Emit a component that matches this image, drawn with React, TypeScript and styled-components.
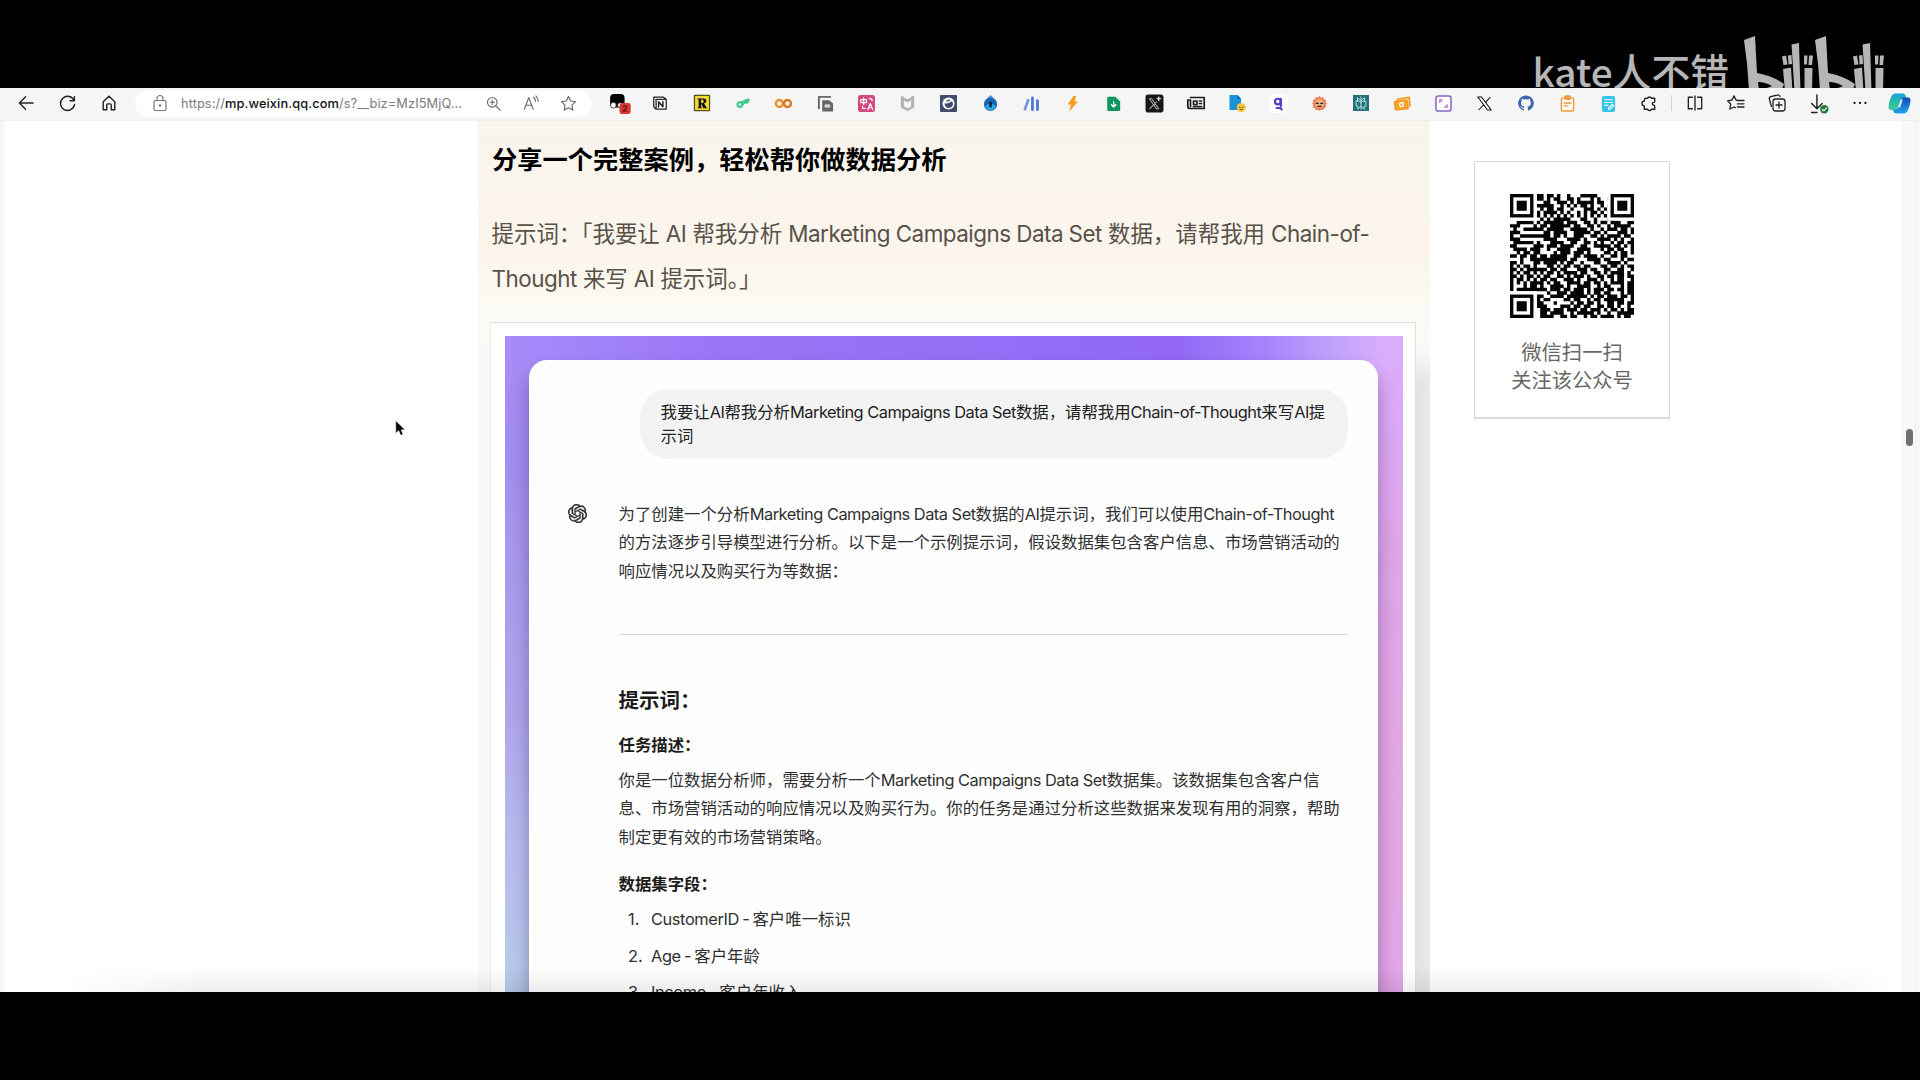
import React from "react";
import styled, { createGlobalStyle } from "styled-components";

const Global = createGlobalStyle`
  * { box-sizing: border-box; }
  body { margin: 0; background: #000; overflow: hidden; }
`;

const SANS = `Inter, "Noto Sans CJK SC", sans-serif`;

const Screen = styled.div`
  display: flex;
  flex-direction: column;
  width: 1920px;
  height: 1080px;
  background: #000;
  font-family: ${SANS};
  position: relative;
`;

const TopBand = styled.div`
  height: 88px;
  flex: none;
  display: flex;
  justify-content: flex-end;
  align-items: flex-start;
  overflow: hidden;
  padding: 36px 34px 0 0;
  gap: 15px;
  color: #b6b6b6;
`;
const Author = styled.span`
  font: 500 38.8px/52px "Noto Sans CJK SC", sans-serif;
  padding-top: 8px;
  white-space: nowrap;
`;
const LogoBox = styled.div`
  width: 142px;
  height: 52px;
  svg { display: block; }
`;

const Toolbar = styled.div`
  height: 33px;
  flex: none;
  display: flex;
  align-items: center;
  padding-bottom: 2px;
  background: #f5f5f5;
  border-bottom: 1px solid #efefef;
`;
const NavGroup = styled.div`
  display: flex;
  width: 135px;
  padding-left: 5px;
`;
const Cell = styled.div<{ $w?: number }>`
  width: ${(p) => p.$w ?? 41.23}px;
  flex: none;
  height: 27px;
  display: flex;
  justify-content: center;
  align-items: center;
  svg { display: block; overflow: visible; }
`;
const AddressBar = styled.div`
  width: 457px;
  height: 27px;
  flex: none;
  display: flex;
  align-items: center;
  border-radius: 14px;
  background: #fff;
  padding-left: 16px;
`;
const Url = styled.div`
  width: 294px;
  margin-left: 12px;
  font-size: 12.8px;
  letter-spacing: 0.1px;
  color: #7b7b7b;
  white-space: nowrap;
  b { font-weight: 500; color: #111; }
`;
const Extensions = styled.div`
  display: flex;
  align-items: center;
  padding-left: 6.5px;
`;
const Divider = styled.div`
  width: 1px;
  height: 16px;
  margin: 0 2px 0 1px;
  background: #d4d4d4;
`;

const Page = styled.div`
  height: 871px;
  flex: none;
  overflow: hidden;
  display: flex;
  background: #fff;
  border-left: 4px solid #f7f7f7;
  border-right: 4px solid #f7f7f7;
  position: relative;
`;
const LeftSpace = styled.div`
  width: 474px;
  flex: none;
`;
const Article = styled.main`
  width: 952px;
  flex: none;
  height: 871px;
  overflow: hidden;
  padding: 19.5px 0 0 12px;
  background: linear-gradient(#f9f6e8 0, #f9f4ec 25px, #fbf5ec 130px, #fcf8ee 168px, #fcfbf7 195px, #fbf9f7 230px);
`;
const Title = styled.h1`
  margin: 0 0 0 2px;
  font: 700 25.25px/34px "Noto Sans CJK SC", sans-serif;
  color: #000;
  white-space: nowrap;
`;
const Prompt = styled.div`
  margin: 36.5px 0 0 1.5px;
  font-size: 22.45px;
  line-height: 45px;
  color: #595149;
  word-spacing: -0.25px;
`;
const Line = styled.div`
  white-space: nowrap;
`;
const Latin = styled.span<{ $ls?: number; $ws?: number }>`
  letter-spacing: ${(p) => p.$ls ?? -0.5}px;
  word-spacing: ${(p) => (p.$ws === undefined ? "inherit" : `${p.$ws}px`)};
`;
const Figure = styled.div`
  margin-top: 21px;
  width: 926px;
  height: 900px;
  padding: 13px 12px 0 14px;
  background: #fff;
  border: 1px solid #ecd9d6;
  border-left-color: #f0eaea;
  border-right-color: #eaddd4;
  box-shadow: 24px 40px 22px -4px rgba(0, 0, 0, 0.09);
`;
const Backdrop = styled.div`
  height: 900px;
  padding: 24px 25px 0 24px;
  background:
    linear-gradient(90deg, #a68cfa 0, #9a74f6 25%, #966ef6 50%, #9268f5 75%, #a884fa 85%, #c5a4fd 93%, #dbacfc 98%) 0 0 / 100% 24px no-repeat,
    linear-gradient(#dbacfc 0, #dca9f5 60px, #dfa5e8 200px, #e3a7e3 420px, #e3a5e8 670px) 100% 24px / 40px 100% no-repeat,
    linear-gradient(#a88bf8 0, #a28df0 120px, #aa9cec 250px, #afa6ea 380px, #b7bcee 510px, #b8cdea 660px);
`;
const Card = styled.div`
  height: 900px;
  padding: 29px 30px 0 89.5px;
  border-radius: 18px 18px 0 0;
  background: #fefefe;
  box-shadow: 0 12px 18px rgba(50, 25, 90, 0.38);
`;
const Bubble = styled.div`
  margin-left: 21.5px;
  width: 708px;
  height: 69.5px;
  padding: 11px 0 0 20.5px;
  border-radius: 28px;
  background: #f3f3f3;
  font-size: 16.4px;
  line-height: 24.3px;
  color: #222;
`;
const Answer = styled.div`
  display: flex;
  margin-top: 41px;
  margin-left: -50.5px;
`;
const Avatar = styled.div`
  width: 50.5px;
  flex: none;
  padding-top: 4.5px;
  svg { display: block; }
`;
const Body = styled.div`
  width: 730px;
  font-size: 16.4px;
  line-height: 28.6px;
  color: #303030;
`;
const Rule = styled.hr`
  border: 0;
  height: 1px;
  margin: 48.5px 0 51.5px;
  background: #d9d9d9;
`;
const H3 = styled.h3`
  margin: 0;
  font: 600 20.5px/30px ${SANS};
  color: #1c1c1c;
`;
const H4 = styled.h4<{ $top: number; $bottom: number }>`
  margin: ${(p) => p.$top}px 0 ${(p) => p.$bottom}px;
  font: 600 16.4px/28px ${SANS};
  color: #1c1c1c;
`;
const Item = styled.div`
  display: flex;
  height: 36.7px;
  align-items: center;
  padding-left: 9.5px;
  white-space: pre;
`;
const Num = styled.span`
  width: 23px;
`;

const Side = styled.aside`
  padding: 40px 0 0 44px;
  width: 468px;
  flex: none;
`;
const QrCard = styled.div`
  width: 196px;
  height: 258px;
  border: 1px solid #d9dadc;
  border-right-width: 1.5px;
  border-bottom: 2px solid #d9dadb;
  padding-top: 32px;
  display: flex;
  flex-direction: column;
  align-items: center;
  color: #666;
  font: 400 20.3px/28.6px "Noto Sans CJK SC", sans-serif;
  svg { display: block; margin-bottom: 18.5px; }
`;
const ScrollTrack = styled.div`
  width: 14px;
  flex: none;
  margin-left: 4px;
  background: #f9f9f9;
  border-left: 1px solid #f3f3f3;
  border-right: 1px solid #efefef;
  padding: 308px 0 0 3px;
`;
const Thumb = styled.div`
  width: 7px;
  height: 17px;
  border-radius: 3.5px;
  background: #707070;
`;
const BottomShade = styled.div`
  position: absolute;
  left: 60px;
  right: 20px;
  bottom: 0;
  height: 26px;
  background: linear-gradient(rgba(0, 0, 0, 0), rgba(0, 0, 0, 0.07));
  mask-image: linear-gradient(90deg, transparent, #000 8%, #000 94%, transparent);
`;
const Pointer = styled.div`
  position: absolute;
  left: 395px;
  top: 420px;
  svg { display: block; }
`;

const I: React.FC<{ children: React.ReactNode; s?: number; c?: string; w?: number }> = ({ children, s = 18, c = "#222", w = 1.4 }) => (
  <svg width={s} height={s} viewBox="0 0 18 18" fill="none" stroke={c} strokeWidth={w} strokeLinecap="round" strokeLinejoin="round">
    {children}
  </svg>
);

const OpenAI = () => (
  <svg width="19" height="19" viewBox="0 0 24 24" fill="#2b2b2b" stroke="#2b2b2b" strokeWidth=".5">
    <path d="M22.2819 9.8211a5.9847 5.9847 0 0 0-.5157-4.9108 6.0462 6.0462 0 0 0-6.5098-2.9A6.0651 6.0651 0 0 0 4.9807 4.1818a5.9847 5.9847 0 0 0-3.9977 2.9 6.0462 6.0462 0 0 0 .7427 7.0966 5.98 5.98 0 0 0 .511 4.9107 6.051 6.051 0 0 0 6.5146 2.9001A5.9847 5.9847 0 0 0 13.2599 24a6.0557 6.0557 0 0 0 5.7718-4.2058 5.9894 5.9894 0 0 0 3.9977-2.9001 6.0557 6.0557 0 0 0-.7475-7.0729zm-9.022 12.6081a4.4755 4.4755 0 0 1-2.8764-1.0408l.1419-.0804 4.7783-2.7582a.7948.7948 0 0 0 .3927-.6813v-6.7369l2.02 1.1686a.071.071 0 0 1 .038.052v5.5826a4.504 4.504 0 0 1-4.4945 4.4944zm-9.6607-4.1254a4.4708 4.4708 0 0 1-.5346-3.0137l.142.0852 4.783 2.7582a.7712.7712 0 0 0 .7806 0l5.8428-3.3685v2.3324a.0804.0804 0 0 1-.0332.0615L9.74 19.9502a4.4992 4.4992 0 0 1-6.1408-1.6464zM2.3408 7.8956a4.485 4.485 0 0 1 2.3655-1.9728V11.6a.7664.7664 0 0 0 .3879.6765l5.8144 3.3543-2.0201 1.1685a.0757.0757 0 0 1-.071 0l-4.8303-2.7865A4.504 4.504 0 0 1 2.3408 7.872zm16.5963 3.8558L13.1038 8.364 15.1192 7.2a.0757.0757 0 0 1 .071 0l4.8303 2.7913a4.4944 4.4944 0 0 1-.6765 8.1042v-5.6772a.79.79 0 0 0-.407-.667zm2.0107-3.0231l-.142-.0852-4.7735-2.7818a.7759.7759 0 0 0-.7854 0L9.409 9.2297V6.8974a.0662.0662 0 0 1 .0284-.0615l4.8303-2.7866a4.4992 4.4992 0 0 1 6.6802 4.66zM8.3065 12.863l-2.02-1.1638a.0804.0804 0 0 1-.038-.0567V6.0742a4.4992 4.4992 0 0 1 7.3757-3.4537l-.142.0805L8.704 5.459a.7948.7948 0 0 0-.3927.6813zm1.0976-2.3654l2.602-1.4998 2.6069 1.4998v2.9994l-2.5974 1.4997-2.6067-1.4997Z" />
  </svg>
);

const extensionIcons: React.ReactNode[] = [
  <I s={20} c="none">
    <rect x="1" y="1" width="13" height="12" rx="3.5" fill="#000" />
    <circle cx="4" cy="11" r="2.6" fill="#fff" stroke="#000" strokeWidth=".6" />
    <circle cx="10" cy="11" r="2.3" fill="#fff" stroke="#000" strokeWidth=".6" />
    <rect x="9.5" y="9" width="10" height="10" rx="2.2" fill="#dc3535" />
    <path d="M12.8 12.2q1.7-1.7 3 0 .5 1.2-3.2 4h3.6" stroke="#581010" strokeWidth="1" />
  </I>,
  <I s={14} w={1.6}><path d="M1 1.6h12.5L17 4.3V17H4L1 14Z M3.6 4.4H17M4 4.5V17" fill="#fff" /><path d="M7.2 14V7.4l5.5 6.4V7.2" strokeWidth="1.9" /></I>,
  <I s={16} c="none"><rect x=".5" y=".5" width="17" height="17" fill="#f0d935" stroke="#54501e" /><path d="M4 4h6.5c4.5 0 4.3 5 .8 5.4L14 14h1v1h-4.3L8 9.8V14h1.3v1H4v-1h1.2V5H4ZM8 5v4h1.2c2.2 0 2.2-4 0-4Z" fill="#111" fillRule="evenodd" /></I>,
  <I s={14} c="#3fc98b" w={2.7}><circle cx="5" cy="11" r="3" /><path d="M6 8.300 16.500 4.500M8.300 11c2.500 0 2-4 4.200-5.800M11 8.600c2 .3 3.500 0 4.600-1.700" /></I>,
  <I s={17} c="#e8922d" w={2.6}><circle cx="4.6" cy="9" r="3.7" /><circle cx="13.2" cy="9" r="3.7" stroke="#d9791f" /></I>,
  <I s={17} c="#666" w={2}><path d="M2 14V2h12" /><path d="M5.5 5.500h7.500L17 9v8.500H5.500Z" fill="#666" stroke="none" /><path d="M8.500 12.500v-2h5v2Z" stroke="#ddd" strokeWidth="1" fill="#ddd" /></I>,
  <I s={17} c="#fff" w={1.3}><rect width="18" height="18" rx="2.500" fill="#d34a80" stroke="none" /><path d="M3 5h6v3H3ZM6 3v7M10.500 15.500 13 9l2.600 6.500M11.300 13.500h3.400M5 12v2.300h3M12 3.500c2 0 3 .7 3 2.500" /></I>,
  <I s={17} c="#b3b3b3" w={2.600}><path d="M3.500 2.800 9 6.500l5.500-3.700v9.700L9 15.800l-5.500-3.300Z" strokeLinejoin="miter" /><path d="M3.500 3v9M14.500 3v9" strokeWidth="3.200" /></I>,
  <I s={17} c="none"><rect width="18" height="18" rx="1" fill="#3d4d6b" /><circle cx="9" cy="9" r="6.400" fill="#fff" /><circle cx="9.300" cy="9.400" r="4.400" fill="#3d4d6b" /><path d="M3.500 8c3.500 2.500 7-.5 10.500-2l-3-3-5.500 1Z" fill="#fff" /><path d="M6 6.500q3-2.500 5-1.500-1 2.500-5 1.500Z" fill="#3d4d6b" /></I>,
  <I s={17} c="none"><path d="M9 0 5 4 2 8h14l-3-4Z" fill="#3a8fd0" /><circle cx="9" cy="10" r="7" fill="#1c68b4" /><path d="M3 12q6 9 12 0l-6-4Z" fill="#2fa8e8" /><circle cx="9" cy="9" r="2" fill="#0d2c55" /><path d="M8 10h2l.7 3H7.300Z" fill="#0d2c55" /></I>,
  <I s={17} c="#4b78cf" w={2.900}><path d="M5.500 5.500 2 15" stroke="#7397dc" /><path d="M10 3v12.500" /><path d="M15.300 6v9.500" /></I>,
  <I s={17} c="none"><path d="M10 1 3.800 10h3.500l-1.800 7.500L14.800 7H11l2-6Z" fill="#f49b22" /></I>,
  <I s={15} c="#fff" w={1.600}><path d="M3 1h8l6 5.500V17a1 1 0 0 1-1 1H3a1.500 1.500 0 0 1-1.500-1.500v-14A1.500 1.500 0 0 1 3 1Z" fill="#0f9561" stroke="none" /><path d="M9.200 7v6M6.500 10.500l2.700 2.700 2.700-2.700" /></I>,
  <I s={17} c="#aaa" w={1.100}><rect x="-.5" y="-.5" width="19" height="19" rx="3" fill="#171717" stroke="none" /><path d="M3.500 4H6l7.500 10.500H11ZM11 7.500 4 14.500" /><path d="M13.500 2v4M11.500 4h4" stroke="#fff" /></I>,
  <I s={18} c="#1c1c1c" w={1.700}><path d="M3.500 3.500h13.700v11H2.800a2 2 0 0 1-2-2V6h2.700v6.500M6.500 7h3.500v3.500H6.500ZM12.500 7h2M12.500 9.500h2M6.500 12.500h8" /></I>,
  <I s={18} c="none"><path d="M1.500 1h8L13 4.500V16H1.500Z" fill="#1793d8" /><path d="M9.500 1v4H13Z" fill="#0969a5" /><circle cx="13.200" cy="13.500" r="4.500" fill="#f6c73b" /><path d="M11.200 13l1 .3M15.400 13l-1 .3M11.900 15.300q1.300 1 2.600 0" stroke="#6d4a10" strokeWidth=".9" /></I>,
  <I s={17} c="#5640c4" w={2.300}><rect x="-1" y="-1" width="20" height="20" rx="6" fill="#fff" stroke="none" /><circle cx="8.300" cy="7" r="3" /><path d="M11.500 4v8M7 13.800h3.500l2 1.500" /></I>,
  <I s={15} c="none"><path d="M9 0l1.800 2 2.700-.8.800 2.700 2.700.8-.8 2.700L18 9l-1.800 1.800.8 2.700-2.700.8-.8 2.700-2.700-.8L9 18l-1.800-1.800-2.700.8-.8-2.700-2.700-.8.800-2.700L0 9l1.800-1.600L1 4.700l2.700-.8.800-2.700 2.700.8Z" fill="#ea7b52" /><circle cx="9" cy="9" r="5.500" fill="#f6b183" /><path d="M4.500 8h3.500v1.500H4.500ZM10 8h3.500v1.500H10Z" fill="#222" /><path d="M7 12q2 1.200 4 0" stroke="#222" /></I>,
  <I s={16} c="#b9e0de" w={1.100}><rect width="18" height="18" fill="#22727a" stroke="none" /><path d="M9 2v14M9 6.500 5 3v4M9 6.500 13 3v4M3.500 7v5.500h2V16L9 12.500l3.500 3.500v-3.500h2V7H11L9 9 7 7Z" /></I>,
  <I s={17} c="#f39a20" w={1.800}><path d="M3.500 4.500 16 2.500l1 9" /><g transform="rotate(-6 8 10)"><rect x="1" y="6" width="13.500" height="9" rx="1" fill="#f7a733" /><path d="M9 8.500q-3-1-3 1.700t3 1.700M9.500 8v3" stroke="#fff" strokeWidth="1.300" /></g></I>,
  <I s={17} c="#8468c4" w={1.600}><rect x="1" y="1" width="16" height="16" rx="2.500" fill="#fff" /><path d="M5 8V5h3M13 10v3h-3M5 5l2 2M13 13l-2-2" stroke="#c07ac0" strokeWidth="1.200" /></I>,
  <I s={15} c="#111" w={1.300}><path d="M1 1.200h4.500L17 16.800h-4.500ZM16 1.200 10 8M8 10.500 2 16.800" strokeLinecap="butt" /></I>,
  <I s={16} c="none"><path d="M9 .5a8.700 8.700 0 0 0-2.800 17c.5.1.6-.2.600-.4v-1.700c-2.400.5-3-1-3-1-.4-1-1-1.300-1-1.300-.8-.5 0-.5 0-.5.900 0 1.400.9 1.400.9.800 1.300 2 1 2.600.7 0-.6.300-1 .5-1.200-2-.2-4-1-4-4.300 0-1 .3-1.700.9-2.300 0-.2-.4-1.100.1-2.300 0 0 .7-.2 2.400.9a8 8 0 0 1 4.400 0c1.700-1.100 2.400-.9 2.400-.9.500 1.200.1 2.100.1 2.300.600.600.9 1.400.9 2.300 0 3.300-2 4.100-4 4.300.3.300.6.8.6 1.600v2.500c0 .2.100.5.600.4A8.700 8.700 0 0 0 9 .5Z" fill="#3d68ad" /></I>,
  <I s={17} c="#eb9d45" w={1.500}><rect x="2.500" y="3" width="13" height="14" rx="1.500" fill="#fff8ee" /><rect x="6" y="1" width="6" height="3.500" rx="1" fill="#eb9d45" /><path d="M5.500 8.500h7M5.500 11.500h4" /></I>,
  <I s={17} c="#fff" w={1.200}><rect x="2" y="1" width="14" height="17" rx="2" fill="#35c5ea" stroke="none" /><path d="M5 5h8M5 8h8M5 11h3.500M9 14l4-4 1.500 1.500-4 3.500H9Z" /></I>,
  <I s={17} c="#222" w={1.500}><path d="M5.500 3.500H7a2.100 2.100 0 0 1 4 0h3.500V7a1 1 0 0 1-1 .8 1.500 1.500 0 0 0 0 3 1 1 0 0 1 1 .7V15H11a2.100 2.100 0 0 1-4 0H3.500v-3.500a2.500 2.500 0 0 1 0-5V5.500a2 2 0 0 1 2-2Z" /></I>,
];
const browserIcons: React.ReactNode[] = [
  <I s={16} w={1.500}><path d="M6 2.500H1.500v13H6M9 1v16M12 2.500h4.500v13H12" /></I>,
  <I s={18} w={1.300}><path d="M11 6.500 9 6 7 1.800 5 6l-4.500.8 3.200 3.200-.8 5L7 13l1.500.8M11 6.500h6M10.500 9.800H17M10.500 13H17" /></I>,
  <I s={18} w={1.300}><rect x="5" y="5" width="12" height="12" rx="2.500" /><path d="M11 8v6M8 11h6M3.500 12.500 1.300 5a2 2 0 0 1 1.400-2.300L9.500 1A2 2 0 0 1 12 2.500" /></I>,
  <I s={19} w={1.400}><path d="M7.500 1v13M2.500 9l5 5 5-5M2.500 17.500h5" /><circle cx="14.500" cy="14.500" r="4" fill="#21793b" stroke="none" /><path d="m12.600 14.500 1.400 1.400 2.500-2.600" stroke="#fff" strokeWidth="1.100" /></I>,
  <I s={14} c="none"><circle cx="2" cy="9" r="1.500" fill="#222" /><circle cx="9" cy="9" r="1.500" fill="#222" /><circle cx="16" cy="9" r="1.500" fill="#222" /></I>,
];

const Copilot = () => (
  <svg width="23" height="21" viewBox="0 0 23 21">
    <defs>
      <linearGradient id="cpA" x1="0" y1="0" x2="0" y2="1">
        <stop offset="0" stopColor="#1aa0dc" /><stop offset=".6" stopColor="#2bbf9b" /><stop offset="1" stopColor="#54c9a1" />
      </linearGradient>
      <linearGradient id="cpB" x1="0" y1="0" x2="0" y2="1">
        <stop offset="0" stopColor="#1947b5" /><stop offset="1" stopColor="#1fa8f2" />
      </linearGradient>
    </defs>
    <path d="M7 .5h8q2 0 2.800 2.500l.8 2.500H15q-2 0-2.700 2L10 14q-1 3-3.500 3H3Q.3 17 .5 13.500 1 8 3.500 3 5 .5 7 .5Z" fill="url(#cpA)" />
    <path d="M16 20.500H8q-2 0-2.800-2.500l-.5-1.500H7q2.500 0 3.500-3l2-6q1-3 3.500-3h4q2.700 0 2.500 3.500-.500 5.500-3 10Q18 20.500 16 20.500Z" fill="url(#cpB)" />
    <path d="M13 6.500h1.800l-2.800 8h-1.800Z" fill="#eaf6fb" />
  </svg>
);

const LOGO_HALF = (
  <>
    <path d="M0 4 11 0 13 37 Q29 40 40 48 L37 56 H5 Q4 30 0 4Z M14 46 L15 54 Q24 52 28 50 Q21 46 14 46Z" fillRule="evenodd" />
    <path d="M38 20.500l4-1 1.500 9-4 .5ZM44 19.500l3.500-.5.5 9-3.500.500ZM39 33l8-1.500 1.500 24h-7.500Z" />
    <path d="M47.500 8.500 55 7l1.500 49h-6Z" />
    <path d="M60 19.500h3.500l-.5 9h-3ZM65 19.500h4l-1 9.500h-3.500ZM60.500 32h8l-.5 24h-7.500Z" />
  </>
);

const QR = [
  "1111111011011010010001111100001001111",
  "1000001011010110011010001010011001000",
  "1011101000110011101011111011001101011",
  "1011101011111001010101101001010101011",
  "1011101001011011001000111010101001011",
  "1000001010111101010010101101011001000",
  "1111111010101010101010101010101011111",
  "0000000001010111110001100100011100000",
  "0011111010111111011100110101101110011",
  "1110000101101111110110011010010111110",
  "0100111111011111001111101001011101101",
  "1110000000110111100111110110100011101",
  "1001111111110110100111001101011110110",
  "1110000000111100011110100011110101001",
  "0111111010001111001100110101001011011",
  "1100000111011101111001100111110110101",
  "0111101110010011110011110001011011001",
  "0010110110000101110111010000110101101",
  "1101101101101111100110111101001101100",
  "0001001111111111101100011110110001011",
  "1101000110111101011001000110011110100",
  "1010110100011010110110110001101101011",
  "1101011111101101100011101100110011001",
  "1010110101011010111101100110101111010",
  "1101011010110011010111010011011011011",
  "1011010101101100111010011101001011001",
  "1010101111010110011110110110101111011",
  "1000101101001111010011110010110001011",
  "1011111111101110110111010111011011011",
  "0000000000010011101111010110110001011",
  "1111111011001111011111101011011101101",
  "1000001010110000110110010110111111001",
  "1011101011000100001011011010011011011",
  "1011101011100001110110110011011010010",
  "1011101001110111011101101110101101011",
  "1000001001101111001011111010010011111",
  "1111111001111001101100101101111010110",
];
// Finder squares are drawn on top of the data modules.
const Finder = ({ x, y }: { x: number; y: number }) => (
  <>
    <rect x={Math.max(0, x - 1)} y={Math.max(0, y - 1)} width="8" height="8" fill="#fff" />
    <rect x={x + 0.5} y={y + 0.5} width="6" height="6" fill="none" stroke="#050505" />
    <rect x={x + 2} y={y + 2} width="3" height="3" fill="#050505" />
  </>
);
const QrCode = () => (
  <svg width="124" height="124" viewBox="0 0 37 37">
    <path
      fill="#050505"
      d={QR.flatMap((r, y) => [...r].map((c, x) => (c === "1" ? `M${x} ${y}h1.03v1.03h-1.03z` : ""))).join("")}
    />
    <Finder x={0} y={0} />
    <Finder x={30} y={0} />
    <Finder x={0} y={30} />
  </svg>
);

export default function App() {
  return (
    <Screen>
      <Global />
      <TopBand>
        <Author>kate人不错</Author>
        <LogoBox>
          <svg width="142" height="56" viewBox="0 0 142 56" fill="#b6b6b6">
            <g>{LOGO_HALF}</g>
            <g transform="translate(71 0)">{LOGO_HALF}</g>
          </svg>
        </LogoBox>
      </TopBand>
      <Toolbar>
        <NavGroup>
          <Cell $w={41.5}><I s={16} w={1.5}><path d="M17 9H1.500M8.500 2 1.500 9l7 7" /></I></Cell>
          <Cell $w={41.5}><I s={17} w={1.500}><path d="M16 6a7.500 7.500 0 1 0 .5 4M16.300 1.500V6h-4.500" /></I></Cell>
          <Cell $w={41.5}><I s={16} w={1.600}><path d="M2.500 7.500 9 1.500l6.500 6V16.500h-4V11a1 1 0 0 0-1-1h-3a1 1 0 0 0-1 1v5.500h-4Z" /></I></Cell>
        </NavGroup>
        <AddressBar>
          <I s={18} c="#777" w={1.200}><rect x="3" y="6.500" width="12" height="10" rx="1.500" /><path d="M6 6.500V4.500a3 3 0 0 1 6 0v2" /><circle cx="9" cy="11.500" r=".6" fill="#777" /></I>
          <Url>https://<b>mp.weixin.qq.com</b>/s?__biz=MzI5MjQ...</Url>
          <Cell $w={37.500}><I s={15} c="#666" w={1.300}><circle cx="7.500" cy="7.500" r="5.800" /><path d="m12 12 5 5M7.500 4.800v5.400M4.800 7.500h5.400" /></I></Cell>
          <Cell $w={37.500}><I s={16} c="#666" w={1.300}><path d="M1.500 16 6.500 3l5 13M3.300 11.500h6.400M12 2.500q2 1.500 2 4.500M14.500 1q2.500 2.500 2.500 6" /></I></Cell>
          <Cell $w={37.500}><I s={17} c="#666" w={1.200}><path d="m9 1.500 2.300 4.900 5.200.7-3.800 3.700.9 5.200L9 13.500 4.400 16l.9-5.200L1.500 7.100l5.200-.7Z" /></I></Cell>
        </AddressBar>
        <Extensions>
          {extensionIcons.map((icon, i) => (
            <Cell key={i}>{icon}</Cell>
          ))}
          <Divider />
          {browserIcons.map((icon, i) => (
            <Cell key={i}>{icon}</Cell>
          ))}
          <Cell $w={38}><Copilot /></Cell>
        </Extensions>
      </Toolbar>
      <Page>
        <LeftSpace />
        <Article>
          <Title>分享一个完整案例，轻松帮你做数据分析</Title>
          <Prompt>
            <Line>提示词：「我要让 <Latin>AI</Latin> 帮我分析 <Latin>Marketing Campaigns Data Set</Latin> 数据，请帮我用 <Latin>Chain-of-</Latin></Line>
            <Line><Latin>Thought</Latin> 来写 <Latin>AI</Latin> 提示词。」</Line>
          </Prompt>
          <Figure>
            <Backdrop>
              <Card>
                <Bubble>
                  <Line>我要让<Latin>AI</Latin>帮我分析<Latin>Marketing Campaigns Data Set</Latin>数据，请帮我用<Latin>Chain-of-Thought</Latin>来写<Latin>AI</Latin>提</Line>
                  <Line>示词</Line>
                </Bubble>
                <Answer>
                  <Avatar><OpenAI /></Avatar>
                  <Body>
                    <Line>为了创建一个分析<Latin>Marketing Campaigns Data Set</Latin>数据的<Latin>AI</Latin>提示词，我们可以使用<Latin>Chain-of-Thought</Latin></Line>
                    <Line>的方法逐步引导模型进行分析。以下是一个示例提示词，假设数据集包含客户信息、市场营销活动的</Line>
                    <Line>响应情况以及购买行为等数据：</Line>
                    <Rule />
                    <H3>提示词：</H3>
                    <H4 $top={14.500} $bottom={7}>任务描述：</H4>
                    <Line>你是一位数据分析师，需要分析一个<Latin>Marketing Campaigns Data Set</Latin>数据集。该数据集包含客户信</Line>
                    <Line>息、市场营销活动的响应情况以及购买行为。你的任务是通过分析这些数据来发现有用的洞察，帮助</Line>
                    <Line>制定更有效的市场营销策略。</Line>
                    <H4 $top={18.500} $bottom={3}>数据集字段：</H4>
                    <Item><Num>1.</Num><Latin $ls={-0.4} $ws={-1}>CustomerID - </Latin>客户唯一标识</Item>
                    <Item><Num>2.</Num><Latin $ls={-0.4} $ws={-1}>Age - </Latin>客户年龄</Item>
                    <Item><Num>3.</Num><Latin $ls={-0.4} $ws={-1}>Income - </Latin>客户年收入</Item>
                  </Body>
                </Answer>
              </Card>
            </Backdrop>
          </Figure>
        </Article>
        <Side>
          <QrCard>
            <QrCode />
            <span>微信扫一扫</span>
            <span>关注该公众号</span>
          </QrCard>
        </Side>
        <ScrollTrack><Thumb /></ScrollTrack>
        <BottomShade />
      </Page>
      <Pointer>
        <svg width="12" height="17" viewBox="0 0 12 17">
          <path d="M.8.8v12.400l2.900-2.600 2 4.700 2.300-1-2-4.500h4Z" fill="#000" stroke="#ddd" strokeWidth=".6" />
        </svg>
      </Pointer>
    </Screen>
  );
}
